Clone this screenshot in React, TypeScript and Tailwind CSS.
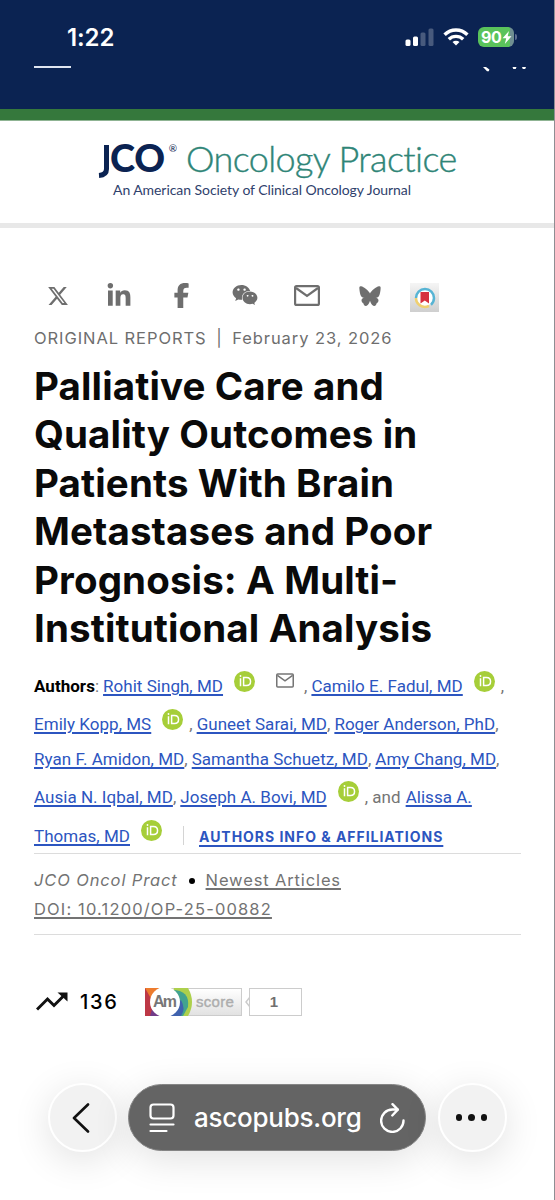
import type { ReactNode } from "react";
import { FaFacebookF, FaLinkedinIn, FaWeixin, FaXTwitter } from "react-icons/fa6";

const StatusBar = () => {
  return (
    <div className="flex h-[66px] items-start justify-between pl-[67px] pr-[37px] text-white">
      <span className="mt-[23px] text-[24px] leading-[30px] font-semibold tracking-[-0.1px]">
        1:22
      </span>
      <div className="mt-[27px] flex items-center">
        <svg width="29" height="18" viewBox="0 0 29 18" fill="currentColor">
          <rect x="0.5" y="11.5" width="5" height="6.5" rx="1.5" />
          <rect x="8" y="8.5" width="5" height="9.5" rx="1.5" />
          <rect x="15.5" y="4.5" width="5" height="13.5" rx="1.5" opacity="0.25" />
          <rect x="23.5" y="0.5" width="5" height="17.5" rx="1.5" opacity="0.25" />
        </svg>
        <svg
          className="ml-[9px]"
          width="26"
          height="18"
          viewBox="0 0 26 18"
          fill="none"
          stroke="currentColor"
          strokeWidth="3.4"
        >
          <path d="M1.6 6.8a16 16 0 0 1 22.8 0" />
          <path d="M5.8 11.3a10.3 10.3 0 0 1 14.4 0" />
          <path d="M13 17.6l-3.5-3.5a5 5 0 0 1 7 0z" fill="currentColor" stroke="none" />
        </svg>
        <div className="ml-[9px] flex h-[20px] w-[36px] items-center rounded-[6px] bg-linear-to-r from-[#5ac35b] from-88% to-[#6f8f91] to-88% pl-[3px]">
          <span className="text-[16px] leading-none font-bold tracking-[-0.4px]">90</span>
          <svg className="ml-px" width="10" height="13" viewBox="0 0 10 13" fill="currentColor">
            <path d="M7 0L.5 7.3h3.7L2.8 13l6.7-7.7H5.7z" />
          </svg>
        </div>
        <span className="ml-px h-[6px] w-[2px] rounded-r-full bg-[#5d6d91]" />
      </div>
    </div>
  );
};

const SiteHeader = () => {
  return (
    <header>
      <div className="h-[109px] bg-[#0b2352]">
        <StatusBar />
        {/* Menu, search and cart, mostly scrolled under the status bar */}
        <div className="flex h-[43px] items-start justify-between pr-[27px] pl-[34px]">
          <span className="h-[2px] w-[37px] bg-[#dfe5f0]" />
          <svg width="46" height="7" viewBox="0 0 46 7" fill="#fff">
            <path d="M2 1h3l3.4 2.4-.6 1.8H6z" />
            <path d="M31.5 1h4l-.8 2h-2.4zM41 1h4l-.8 2h-2.4z" />
          </svg>
        </div>
      </div>
      <div className="h-[12px] border-b border-[#8fb493] bg-[#35783c]" />
      <div className="h-[102px] pt-[18px] font-[Lato,sans-serif]">
        <div className="flex h-[41px] items-start pl-[98px] whitespace-nowrap">
          <svg width="12" height="40" viewBox="0 0 12 40" fill="none" stroke="#0b2352" strokeWidth="5">
            <path d="M8.5 6v24q0 6-7.500 6.500" />
          </svg>
          <span className="text-[38px] leading-[37px] font-black tracking-[-0.3px] text-[#0b2352]">CO</span>
          <span className="mt-[4px] ml-[4px] text-[10px] leading-none text-[#0b2352]">®</span>
          <span className="ml-[9px] text-[36px] leading-[38px] font-light tracking-[-0.6px] text-[#2f8577] [-webkit-text-stroke:0.4px_#2f8577]">
            Oncology Practice
          </span>
        </div>
        <p className="pl-[113px] text-[14px] leading-[20px] tracking-[-0.06px] whitespace-nowrap text-[#2f416c]">
          An American Society of Clinical Oncology Journal
        </p>
      </div>
      <div className="h-[5px] bg-[#e8e8e8]" />
    </header>
  );
};

const MailIcon = ({ className }: { className?: string }) => (
  <svg className={className} viewBox="0 0 26 21" fill="none" stroke="currentColor" strokeWidth="2.2">
    <rect x="1.1" y="1.1" width="23.8" height="18.8" rx="1.5" />
    <path d="M2 3l11 8 11-8" />
  </svg>
);

const ShareRow = () => {
  return (
    <div className="flex h-[30px] items-center text-[#6e6e6e]">
      <FaXTwitter className="ml-[13px] size-[22px]" />
      <FaLinkedinIn className="ml-[37px] size-[26px]" />
      <FaFacebookF className="relative -top-px ml-[37px] size-[25px]" />
      <FaWeixin className="relative -top-px ml-[38px] size-[26px]" />
      <MailIcon className="relative -top-px ml-[36px] h-[21px] w-[26px]" />
      <svg className="ml-[39px]" width="22" height="21" viewBox="0 0 22 21" fill="currentColor">
        <path d="M11 7.500C9.500 4.500 5 .8 2 .3.500 0 .2 1 .4 3c.2 2.600.800 5.500 1.600 7 .6 1.300 2 1.900 3.600 1.800-1.800.3-3 1-3.100 2.600.100 1.200 1 2.300 2 3.200.2 1.900 1.600 2.800 3.100 2.200 1.700-.700 2.800-3 3.400-5 .6 2 1.700 4.300 3.400 5 1.500.6 2.900-.3 3.100-2.200 1-.9 1.900-2 2-3.200-.100-1.600-1.300-2.300-3.100-2.600 1.600.100 3-.5 3.600-1.800.8-1.500 1.400-4.400 1.600-7 .2-2-.1-3-1.600-2.700-3 .5-7.500 4.200-9 7.200z" />
      </svg>
      <div className="mt-[3px] ml-[29px] flex size-[29px] items-center justify-center bg-linear-to-b from-[#f5f5f5] to-[#cfcfcf]">
        <svg width="22" height="22" viewBox="0 0 22 22" fill="none">
          <circle cx="11" cy="11" r="8" fill="#fff" />
          <path d="M2 11a9 9 0 0 1 18 0c0 3-1.200 5.200-3 6.700" stroke="#57b4d4" strokeWidth="2.5" />
          <path d="M2 11c0 6 6 11 13 8" stroke="#f0d070" strokeWidth="2.5" />
          <path d="M6.500 5h8.500v11.500l-4.200-3-4.300 3z" fill="#d6303d" />
        </svg>
      </div>
    </div>
  );
};

const Orcid = ({ className = "" }: { className?: string }) => (
  <svg
    className={`${className} relative -top-[5px] size-[21px] shrink-0`}
    viewBox="0 0 21 21"
    fill="none"
    stroke="#fff"
    strokeWidth="1.5"
  >
    <circle cx="10.5" cy="10.5" r="10.5" fill="#a6ce39" stroke="none" />
    <path d="M6.500 7.200v8M9.600 6.500h2.900c5.400 0 5.400 8 0 8H9.600z" />
    <circle cx="6.5" cy="5" r=".9" fill="#fff" stroke="none" />
  </svg>
);

const Author = ({ children, className = "" }: { children: ReactNode; className?: string }) => (
  <a
    href="#"
    className={`${className} text-[#2c55c0] underline decoration-[1.5px] underline-offset-[2px]`}
  >
    {children}
  </a>
);

const authorLine = "flex items-center whitespace-nowrap";

const Authors = () => {
  return (
    <div className="mt-[15px] font-[Roboto,sans-serif] text-[17px] leading-[38px] tracking-[0.03px] text-[#757575]">
      <div className={`${authorLine} h-[38px]`}>
        <b className="font-bold text-black">Authors</b>:
        <Author className="ml-[4px]">Rohit Singh, MD</Author>
        <Orcid className="ml-[11px]" />
        <MailIcon className="relative -top-[6px] ml-[21px] h-[15px] w-[18px]" />
        <span className="ml-[10px]">,</span>
        <Author className="ml-[4px]">Camilo E. Fadul, MD</Author>
        <Orcid className="ml-[11px]" />
        <span className="ml-[6px]">,</span>
      </div>
      <div className={`${authorLine} h-[38px]`}>
        <Author>Emily Kopp, MS</Author>
        <Orcid className="ml-[11px]" />
        <span className="ml-[6px]">,</span>
        <Author className="ml-[4px]">Guneet Sarai, MD</Author>,
        <Author className="ml-[4px]">Roger Anderson, PhD</Author>,
      </div>
      <div className={`${authorLine} h-[32px]`}>
        <Author>Ryan F. Amidon, MD</Author>,
        <Author className="ml-[4px]">Samantha Schuetz, MD</Author>,
        <Author className="ml-[4px]">Amy Chang, MD</Author>,
      </div>
      <div className={`${authorLine} h-[43px]`}>
        <Author>Ausia N. Iqbal, MD</Author>,
        <Author className="ml-[4px]">Joseph A. Bovi, MD</Author>
        <Orcid className="ml-[11px]" />
        <span className="ml-[6px]">, and</span>
        <Author className="ml-[5px]">Alissa A.</Author>
      </div>
      <div className={`${authorLine} h-[35px]`}>
        <Author>Thomas, MD</Author>
        <Orcid className="ml-[11px]" />
        <span className="ml-[21px] h-[19px] w-px bg-[#d4d4d4]" />
        <a
          href="#"
          className="mt-[2px] ml-[15px] font-[Inter,sans-serif] text-[14px] font-bold tracking-[0.97px] text-[#2c55c0] underline decoration-[1.5px] underline-offset-[3px]"
        >
          AUTHORS INFO &amp; AFFILIATIONS
        </a>
      </div>
    </div>
  );
};

const Metrics = () => {
  return (
    <div className="mt-[52px] flex h-[29px] items-center">
      <svg className="ml-[2px]" width="32" height="19" viewBox="0 0 32 19" fill="none" stroke="#111" strokeWidth="3">
        <path d="M1 17.500L11.500 7l6.500 6.500L28 3.500" />
        <path d="M21.500.5h10v9z" fill="#111" stroke="none" />
      </svg>
      <span className="ml-[12px] w-[38px] text-[20px] font-medium tracking-[1.7px] text-black">136</span>
      <div className="ml-[27px] flex h-[28px] w-[97px] border border-[#cccccc] bg-linear-to-b from-white to-[#e2e2e2]">
        <div className="-my-px -ml-px w-[48px] shrink-0">
          <svg width="48" height="28" viewBox="0 0 48 28">
            <rect width="10" height="28" fill="#bd3846" />
            <path d="M0 0h20L8 14z" fill="#ed7b2d" />
            <path d="M5 28l3-10 16 10z" fill="#713b88" />
            <path d="M29 0h14q8 14 0 28H20z" fill="#add04c" />
            <path d="M27 2q18 0 16 17l-5 9H18z" fill="#42a38f" />
            <path d="M36 12q5 9 0 16H18z" fill="#3f62ae" />
            <circle cx="20" cy="14" r="15" fill="#fff" />
            <text
              x="8"
              y="19"
              fontFamily="Liberation Sans"
              fontSize="16"
              fontWeight="700"
              fill="#777"
              textLength="24"
            >
              Am
            </text>
          </svg>
        </div>
        <span className="ml-[3px] font-['Liberation_Sans',sans-serif] text-[15px] leading-[25px] tracking-[0.3px] text-[#adadad] [-webkit-text-stroke:0.4px_#adadad]">
          score
        </span>
      </div>
      <svg className="ml-[3px]" width="5" height="10" viewBox="0 0 5 10" fill="none" stroke="#ccc" strokeWidth="1.5">
        <path d="M5 0L1 5l4 5" />
      </svg>
      <span className="-ml-px flex h-[28px] w-[53px] items-center justify-center border-[1.5px] border-[#cccccc] pr-[3px] font-['Liberation_Sans',sans-serif] text-[15px] font-bold text-[#707070]">
        1
      </span>
    </div>
  );
};

const Article = () => {
  return (
    <main className="px-[34px] pt-[53px]">
      <ShareRow />
      <p className="mt-[15px] text-[16.5px] leading-[24px] tracking-[0.93px] whitespace-nowrap text-[#6e6e6e]">
        ORIGINAL REPORTS <span className="mx-[4px]">|</span> February 23, 2026
      </p>
      <h1 className="mt-[12px] text-[38.5px] leading-[48.4px] font-bold tracking-[0.12px] whitespace-nowrap text-[#0a0a0a]">
        Palliative Care and
        <br />
        Quality Outcomes in
        <br />
        Patients With Brain
        <br />
        Metastases and Poor
        <br />
        Prognosis: A Multi-
        <br />
        Institutional Analysis
      </h1>
      <Authors />
      <div className="h-[82px] w-[487px] border-y-[1.5px] border-[#dcdcdc] pt-[12px] text-[16.5px] leading-[28.5px] tracking-[0.87px] text-[#737373]">
        <div className="flex items-center">
          <em>JCO Oncol Pract</em>
          <span className="ml-[11px] size-[6px] rounded-full bg-black" />
          <a href="#" className="ml-[11px] underline decoration-[1.5px] underline-offset-[2px]">
            Newest Articles
          </a>
        </div>
        <a href="#" className="block tracking-[1.15px] underline decoration-[1.5px] underline-offset-[2px]">
          DOI: 10.1200/OP-25-00882
        </a>
      </div>
      <Metrics />
    </main>
  );
};

const roundButton =
  "flex size-[69px] shrink-0 items-center justify-center rounded-full border-2 border-white bg-[#f2f2f2] shadow-[0_8px_38px_rgba(0,0,0,0.12)]";

const BrowserBar = () => {
  return (
    <nav className="mt-auto mb-[48px] flex items-center pl-[48px]">
      <button className={`${roundButton} pr-[4px]`}>
        <svg width="18" height="30" viewBox="0 0 18 30" fill="none" stroke="#111" strokeWidth="2.6" strokeLinecap="round" strokeLinejoin="round">
          <path d="M16 1.500L2 15l14 13.500" />
        </svg>
      </button>
      <div className="ml-[11px] flex h-[67px] w-[298px] items-center rounded-full border border-[#858585] bg-[#646464] text-white shadow-[0_8px_38px_rgba(0,0,0,0.12)]">
        <svg className="ml-[20px]" width="26" height="30" viewBox="0 0 26 30" fill="none" stroke="currentColor" strokeWidth="2.2" strokeLinecap="round">
          <rect x="1.5" y="1.5" width="23" height="14" rx="3" />
          <path d="M1.500 21.500h23M1.500 28h16" />
        </svg>
        <span className="ml-[19px] text-[26px] font-medium tracking-[-0.25px]">ascopubs.org</span>
        <svg className="ml-auto mr-[20px]" width="25" height="30" viewBox="0 0 25 30" fill="none" stroke="currentColor" strokeWidth="2.4" strokeLinecap="round" strokeLinejoin="round">
          <path d="M23.500 17.500A11.200 11.200 0 1 1 12.300 6.500h5.200" />
          <path d="M12.500 1.200l5.300 5.500-5.500 5.800" />
        </svg>
      </div>
      <button className={`${roundButton} ml-[12px] pr-[2px]`}>
        <span className="flex gap-[6px]">
          <i className="size-[6.5px] rounded-full bg-[#111]" />
          <i className="size-[6.5px] rounded-full bg-[#111]" />
          <i className="size-[6.5px] rounded-full bg-[#111]" />
        </span>
      </button>
    </nav>
  );
};

const App = () => {
  return (
    <div className="flex h-[1200px] w-[555px] flex-col overflow-hidden border-r border-[#8e8e93] bg-white font-[Inter,sans-serif]">
      <SiteHeader />
      <Article />
      <BrowserBar />
    </div>
  );
};

export default App;
